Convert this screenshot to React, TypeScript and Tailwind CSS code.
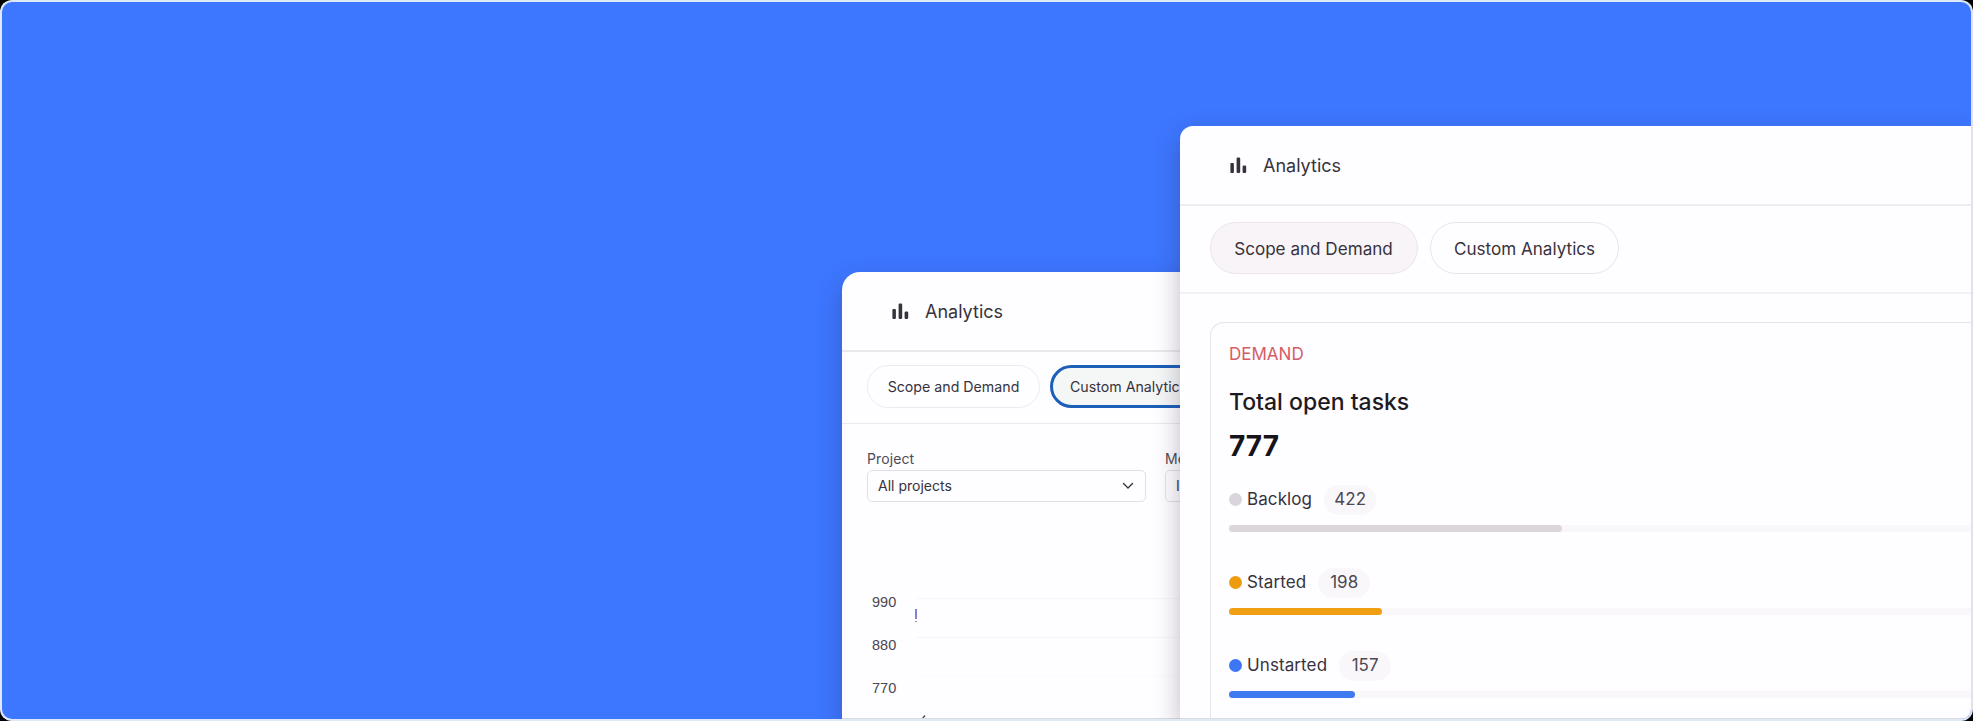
import { ReactNode } from "react";

function BarsIcon() {
  return (
    <svg width="17" height="17" viewBox="0 0 17 17" fill="#37323c" className="shrink-0">
      <rect x="0.4" y="6" width="3.5" height="10" rx="1" />
      <rect x="6.6" y="0.6" width="3.6" height="15.4" rx="1.2" />
      <rect x="12.6" y="8.6" width="3.6" height="7.4" rx="1.2" />
    </svg>
  );
}

function Title({ className }: { className: string }) {
  return (
    <header className={`flex items-center gap-4 border-b-2 ${className}`}>
      <BarsIcon />
      <h1 className="pt-[2px] text-[18px] leading-6 text-[#37323c]">Analytics</h1>
    </header>
  );
}

type Stat = { label: string; count: number; dot: string; bar: string };

const stats: Stat[] = [
  { label: "Backlog", count: 422, dot: "bg-[#dad5dc]", bar: "w-[333px] bg-[#dbd6dc]" },
  { label: "Started", count: 198, dot: "bg-[#ee9c0f]", bar: "w-[153px] bg-[#f09e12]" },
  { label: "Unstarted", count: 157, dot: "bg-[#3f76f5]", bar: "w-[126px] bg-[#3f7bf0]" },
];

function StatRow({ stat }: { stat: Stat }) {
  return (
    <li className="h-[83px]">
      <div className="flex h-[31px] items-center">
        <span className={`size-[13px] rounded-full ${stat.dot}`} />
        <span className="ml-[5px] text-[17px] tracking-[0.1px] text-[#37323c]">{stat.label}</span>
        <span className="ml-3 flex h-[30px] w-[52px] items-center justify-center rounded-full bg-[#faf7fb] text-[17px] text-[#4d4852]">
          {stat.count}
        </span>
      </div>
      <div className="mt-[10px] h-[7px] bg-[#faf7fb]">
        <div className={`h-[7px] rounded-full ${stat.bar}`} />
      </div>
    </li>
  );
}

function Tick({ children, line }: { children: ReactNode; line: string }) {
  return (
    <div className="flex h-[43px] items-center">
      <span className="w-6 pt-px font-['Liberation_Sans',sans-serif] text-[14.5px] text-[#4b4850]">{children}</span>
      <span className={`ml-5 h-px flex-1 ${line}`} />
    </div>
  );
}

function CustomWindow() {
  return (
    <section className="absolute left-[840px] top-[270px] h-[447px] w-[500px] overflow-hidden rounded-tl-[18px] border-b border-[#dcd9df] bg-[#fefdff]">
      <Title className="h-20 border-[#ebe8ec] pl-[50px]" />
      <nav className="flex h-[72px] items-start gap-[10px] border-b border-[#ebe8ee] pl-[25px] pt-[13px]">
        <span className="flex h-[43px] w-[173px] items-center justify-center rounded-full border border-[#ebe9f0] pt-px text-[14.2px] text-[#37323c]">
          Scope and Demand
        </span>
        <span className="flex h-[43px] w-[160px] items-center rounded-full border-[3px] border-[#1c5fb8] bg-[#f5f6f6] pl-[17px] pt-px text-[14.2px] text-[#37323c]">
          Custom Analytics
        </span>
      </nav>
      <div className="flex gap-[19px] pl-[25px] pt-[25px]">
        <label className="block w-[279px] shrink-0">
          <span className="block h-[21px] text-[14px] leading-5 tracking-[0.1px] text-[#4f4b54]">Project</span>
          <span className="flex h-8 items-center justify-between rounded-[5px] border border-[#e2dfe5] pb-px pl-[10px] pr-[11px] text-[14px] text-[#37323c]">
            All projects
            <svg width="12" height="8" viewBox="0 0 12 8" fill="none" stroke="#37323c" strokeWidth="1.4" strokeLinecap="round" strokeLinejoin="round">
              <path d="M1.5 1.5 6 6l4.5-4.5" />
            </svg>
          </span>
        </label>
        <label className="block w-[279px] shrink-0">
          <span className="block h-[21px] text-[14px] leading-5 text-[#4f4b54]">Measure</span>
          <span className="flex h-8 items-center rounded-[5px] border border-[#e2dfe5] pb-px pl-[10px] text-[14px] text-[#37323c]">
            Issues
          </span>
        </label>
      </div>
      <div className="mt-[79px] pl-[30px]">
        <Tick line="mb-[9px] bg-[#f7f5f8]">990</Tick>
        <Tick line="mb-[17px] bg-[#f7f5f8]">880</Tick>
        <Tick line="mb-[26px] bg-[#fbf9fc]">770</Tick>
      </div>
      <span className="absolute left-[73px] top-[337px] h-[10px] w-[2px] bg-[#7e84d0]" />
      <span className="absolute left-[73px] top-[349px] h-px w-[2px] bg-[#9a94a8]" />
      <svg className="absolute left-[79px] top-[443px]" width="5" height="4" viewBox="0 0 5 4">
        <path d="M1 4 4 0.5" stroke="#55515a" strokeWidth="1.5" />
      </svg>
    </section>
  );
}

function ScopeWindow() {
  return (
    <section className="absolute left-[1178px] top-[124px] h-[593px] w-[791px] overflow-hidden rounded-tl-[13px] border-b border-[#dcd9df] bg-[#fefdff]">
      <Title className="h-[80px] border-[#efecf0] pl-[50px]" />
      <nav className="flex h-[88px] items-start gap-3 border-b-2 border-[#f3f0f4] pl-[30px] pt-4">
        <span className="flex h-[52px] w-[208px] items-center justify-center rounded-full border border-[#ebe4e9] bg-[#f8f4f7] pr-px pt-[2px] text-[17.1px] text-[#37323c]">
          Scope and Demand
        </span>
        <span className="flex h-[52px] w-[189px] items-center justify-center rounded-full border border-[#ebe4ea] pt-[2px] text-[17.1px] text-[#37323c]">
          Custom Analytics
        </span>
      </nav>
      <div className="ml-[30px] mt-[28px] h-[500px] rounded-tl-[14px] border-l border-t border-[#e8e3ea] pl-[18px] pt-[19px]">
        <p className="text-[17px] leading-6 text-[#d55c66]">DEMAND</p>
        <h2 className="mt-[20px] text-[23px] font-medium leading-8 text-[#1e1a22]">Total open tasks</h2>
        <p className="mt-[12px] text-[28px] font-bold leading-8 text-[#17131a]">777</p>
        <ul className="mt-[22px]">
          {stats.map((s) => (
            <StatRow key={s.label} stat={s} />
          ))}
        </ul>
      </div>
    </section>
  );
}

export default function App() {
  return (
    <main className="h-[721px] w-[1973px] overflow-hidden bg-black font-['Inter',sans-serif]">
      <div className="relative h-[721px] overflow-hidden rounded-[12px] border-2 border-[#dfeaf8] border-r-[#e4e1ec] bg-[#3d77ff]">
        <div className="absolute left-[840px] top-[270px] h-[447px] w-[500px] rounded-tl-[18px] shadow-[0_10px_26px_rgba(40,30,90,0.3)]" />
        <CustomWindow />
        <div className="absolute left-[1178px] top-[124px] h-[593px] w-[791px] rounded-tl-[13px] shadow-[0_10px_26px_rgba(40,30,60,0.3)]" />
        <ScopeWindow />
      </div>
    </main>
  );
}
